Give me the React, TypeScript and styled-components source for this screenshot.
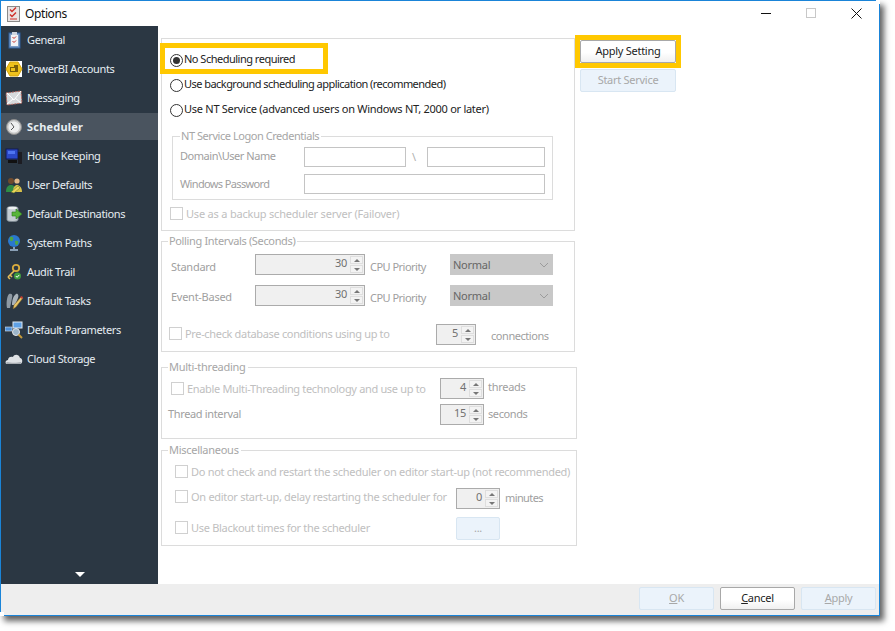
import React from "react";
import styled, { createGlobalStyle } from "styled-components";

const Global = createGlobalStyle`
  html, body { margin: 0; padding: 0; background: #fff; }
  body { font-family: "Noto Sans", "Liberation Sans", sans-serif; font-size: 11px; line-height: 14px; letter-spacing: -0.27px; }
  * { box-sizing: border-box; }
`;

const Page = styled.div`width: 895px; height: 631px; overflow: hidden; background: #fff;`;
const Win = styled.div`
  width: 880px; height: 616px; display: flex; flex-direction: column; background: #fff;
  border: 1px solid #1a84d8; box-shadow: 4px 5px 6px rgba(0,0,0,.62);
`;
const TitleBar = styled.div`height: 25px; display: flex; align-items: center; padding-left: 5px; flex: none;`;
const TitleText = styled.span`font-size: 12px; color: #111; margin-left: 4px; flex: 1; letter-spacing: -0.4px;`;
const WinBtn = styled.div`width: 45px; height: 25px; display: flex; align-items: center; justify-content: center;`;
const Body = styled.div`flex: 1; display: flex; min-height: 0;`;
const Sidebar = styled.nav`width: 157px; background: #2b3743; display: flex; flex-direction: column; flex: none;`;
const NavRow = styled.div<{ $active?: boolean }>`
  height: 27px; margin-bottom: 2px; display: flex; align-items: center; padding-left: 4px; gap: 4px;
  color: #e6edf2; background: ${p => (p.$active ? "#4a545f" : "transparent")};
  font-weight: ${p => (p.$active ? 700 : 400)};
  letter-spacing: ${p => (p.$active ? "0.2px" : "-0.37px")};
`;
const NavIcon = styled.svg`width: 18px; height: 18px; flex: none;`;
const NavArrow = styled.div`
  margin: auto auto 7px; width: 0; height: 0;
  border-left: 5px solid transparent; border-right: 5px solid transparent; border-top: 5px solid #fff;
`;
const Content = styled.main`flex: 1; display: flex; padding: 12px 0 0 3px; align-items: flex-start;`;
const FormCol = styled.div`width: 416px; flex: none; display: flex; flex-direction: column; align-items: flex-start;`;
const SideCol = styled.div`display: flex; flex-direction: column; gap: 6px; padding: 2px 0 0 3px;`;

const Group = styled.section<{ $w: number; $h: number; $mt?: number; $ml?: number; $pl?: number }>`
  width: ${p => p.$w}px; height: ${p => p.$h}px; flex: none;
  margin-top: ${p => p.$mt ?? 0}px; margin-left: ${p => p.$ml ?? 0}px; padding-left: ${p => p.$pl ?? 0}px;
  border: 1px solid #dcdcdc;
`;
const Legend = styled.div<{ $ml?: number; $ls?: number }>`
  display: table; margin: -8px 0 0 ${p => p.$ml ?? 6}px; padding: 0 2px 0 1px; background: #fff; color: #a6a6a6; height: 14px;
  letter-spacing: ${p => p.$ls ?? -0.27}px;
`;
const Row = styled.div<{ $h: number; $mt: number; $pl?: number }>`
  display: flex; align-items: flex-start; height: ${p => p.$h}px; margin-top: ${p => p.$mt}px; padding-left: ${p => p.$pl ?? 0}px;
`;
const RadioList = styled.div`padding-top: 8px;`;
const RadioRow = styled.label<{ $ls?: number }>`
  display: flex; align-items: center; height: 25px; color: #222; gap: 1px; padding-bottom: 1px;
  letter-spacing: ${p => p.$ls ?? -0.27}px;
`;
const Radio = styled.span<{ $on?: boolean }>`
  width: 13px; height: 13px; border-radius: 50%; border: 1px solid #333; background: #fff; flex: none;
  display: flex; align-items: center; justify-content: center; position: relative; top: 1px;
  &::after { content: ""; width: 7px; height: 7px; border-radius: 50%; background: ${p => (p.$on ? "#333" : "transparent")}; }
`;
const Label = styled.span<{ $w?: number; $t?: number; $l?: number; $strong?: boolean; $ls?: number }>`
  display: block; flex: none; width: ${p => (p.$w ? `${p.$w}px` : "auto")}; margin-top: ${p => p.$t ?? 0}px;
  margin-left: ${p => p.$l ?? 0}px; letter-spacing: ${p => p.$ls ?? -0.27}px;
  color: ${p => (p.$strong ? "#a0a0a0" : "#c0c0c0")}; white-space: nowrap;
`;
const Box = styled.span<{ $t?: number }>`
  width: 13px; height: 13px; border: 1px solid #d0d0d0; background: #fff; flex: none; margin-top: ${p => p.$t ?? 0}px;
  margin-right: 3px;
`;
const TextField = styled.div<{ $w: number; $h?: number }>`
  width: ${p => p.$w}px; height: ${p => p.$h ?? 20}px; border: 1px solid #c4c4c4; background: #fff; flex: none;
`;
const Spin = styled.div<{ $w: number }>`
  width: ${p => p.$w}px; height: 21px; flex: none; display: flex; border: 1px solid #ababab; background: #f0f0f0;
`;
const SpinValue = styled.span`flex: 1; text-align: right; color: #707070; padding-right: 3px; line-height: 16px;`;
const SpinBtns = styled.div`width: 14px; display: flex; flex-direction: column; gap: 1px; padding: 1px 1px 1px 0;`;
const SpinBtn = styled.div<{ $down?: boolean }>`
  flex: 1; background: #f3f3f3; border: 1px solid #dedede; display: flex; align-items: center; justify-content: center;
  &::after {
    content: ""; width: 0; height: 0; border-left: 3px solid transparent; border-right: 3px solid transparent;
    ${p => (p.$down ? "border-top: 3px solid #777;" : "border-bottom: 3px solid #777;")}
  }
`;
const Select = styled.div`
  width: 103px; height: 21px; flex: none; background: #c8c8c8; color: #666; display: flex; align-items: center;
  justify-content: space-between; padding: 0 4px 0 3px;
`;
const Btn = styled.div<{ $w: number; $h: number; $active?: boolean }>`
  width: ${p => p.$w}px; height: ${p => p.$h}px; flex: none; display: flex; align-items: center; justify-content: center;
  border-radius: 2px; padding-bottom: 1px;
  ${p => p.$active
    ? "border: 1px solid #a8a8a8; background: linear-gradient(#fff 55%, #f0f0f0); color: #222;"
    : "border: 1px solid #d8e6f2; background: #ebf3fb; color: #a8a8a8;"}
  u { text-underline-offset: 1px; }
`;
const Footer = styled.footer`
  height: 31px; flex: none; background: #eee; display: flex; justify-content: flex-end; gap: 6px; padding: 3px 3px 0 0;
`;
const Highlight = styled.div<{ $x: number; $y: number; $w: number; $h: number }>`
  position: absolute; left: ${p => p.$x}px; top: ${p => p.$y}px; width: ${p => p.$w}px; height: ${p => p.$h}px;
  border: 5px solid #ffc800; pointer-events: none;
`;
const CornerCut = styled.div<{ $x: number; $y: number }>`
  position: absolute; left: ${p => p.$x}px; top: ${p => p.$y}px; width: 4px; height: 4px; background: #fff;
`;
const Stage = styled.div`position: relative;`;
const Backslash = styled.span`width: 21px; flex: none; color: #b0b0b0; text-align: center; padding: 3px 5px 0 0;`;

const Spinner = ({ w, v }: { w: number; v: string }) => (
  <Spin $w={w}><SpinValue>{v}</SpinValue><SpinBtns><SpinBtn /><SpinBtn $down /></SpinBtns></Spin>
);
const Chevron = () => (
  <svg width="10" height="6" viewBox="0 0 10 6"><path d="M1 1l4 4 4-4" fill="none" stroke="#9b9b9b" /></svg>
);

const icons: Record<string, React.ReactNode> = {
  General: <>
    <rect x="4" y="2" width="11" height="15" fill="#7c9cc4" stroke="#2e5f9b" />
    <rect x="6" y="4" width="7" height="11" fill="#f1f3f6" />
    <rect x="7" y="1" width="5" height="3" fill="#cfd6df" />
    <path d="M7.500 6l1.500 1.500 2-2M7.500 10l1.500 1.500 2-2" stroke="#c8322c" fill="none" />
  </>,
  Power: <>
    <rect x="1" y="1" width="16" height="16" fill="#fff" />
    <path d="M5 2h8l4 7-4 7H5L1 9z" fill="#efc21c" stroke="#d4a30c" />
    <path d="M5 7h4v5H5zM9 5h4v7H9z" fill="#7a5f08" />
    <rect x="6" y="8" width="4" height="3" fill="#efc21c" />
  </>,
  Mail: <>
    <path d="M1 4l15-2 1 12-15 2z" fill="#d7dadd" stroke="#b5675f" strokeDasharray="2 1" />
    <path d="M2 4l7 7 7-9M2 15l6-5M10 9l6 5" stroke="#fff" fill="none" />
  </>,
  Clock: <>
    <circle cx="9" cy="9" r="7.500" fill="#c9c9c9" stroke="#8d8d8d" />
    <circle cx="9" cy="9" r="5.500" fill="#efefef" />
    <path d="M9 9L6 5M9 9l-3 3" stroke="#555" fill="none" />
  </>,
  House: <>
    <rect x="1" y="2" width="12" height="10" fill="#2b49c8" stroke="#101a55" />
    <rect x="3" y="13" width="9" height="3" fill="#111" />
    <rect x="13" y="5" width="4" height="12" fill="#1c1c22" />
    <path d="M3 4h7v3H3z" fill="#4f75f0" />
  </>,
  Users: <>
    <circle cx="6" cy="5" r="3" fill="#6f4a2c" />
    <path d="M1 16c0-5 2-7 5-7s5 2 5 7z" fill="#2f8b45" />
    <circle cx="12" cy="5" r="2.600" fill="#e2b98a" />
    <path d="M8 16c0-5 2-7 4-7s5 2 5 7z" fill="#d9c14a" />
    <path d="M6 16l7-6 2 2-6 5z" fill="#efd65a" stroke="#587c2e" strokeWidth=".5" />
  </>,
  Dest: <>
    <path d="M2 3c0-2 11-2 11 0v12c0 2-11 2-11 0z" fill="#c4ccd2" stroke="#7b8791" />
    <ellipse cx="7.500" cy="3" rx="4.500" ry="1.300" fill="#eef1f3" />
    <path d="M7 7h4V4l6 5-6 5v-3H7z" fill="#58b53a" stroke="#2c7a1d" strokeWidth=".6" />
  </>,
  Globe: <>
    <circle cx="9" cy="7" r="6" fill="#2a78cf" />
    <path d="M5 3c3-1 4 1 3 3S4 8 5 3zM10 7c3-1 4 0 3 3-2 2-3 1-3-3z" fill="#4da644" />
    <path d="M9 13v2M5 16h8" stroke="#a9c2dd" strokeWidth="1.500" />
  </>,
  Key: <>
    <circle cx="11" cy="5" r="3.200" fill="none" stroke="#d9ab3d" strokeWidth="1.800" />
    <path d="M9 8l-6 6M3 14l2 2M5 12l2 2" stroke="#e6bd58" strokeWidth="1.600" fill="none" />
    <circle cx="12.500" cy="13" r="3.500" fill="#3f9c3f" />
    <path d="M10.800 13l1.300 1.300 2.200-2.400" stroke="#fff" fill="none" />
  </>,
  Tasks: <>
    <path d="M4 2c3-1 4 1 3 4L5 16H2C1 11 2 4 4 2z" fill="#8e99a3" />
    <path d="M11 2c2-1 3 2 2 4l-3 7H7c0-4 1-9 4-11z" fill="#aab3ba" />
    <path d="M8 17l1-4 7-8 2 1-7 9z" fill="#e9c668" stroke="#7b5a20" strokeWidth=".5" />
    <path d="M15 5l2-1 1 2-1 1z" fill="#c53b33" />
  </>,
  Params: <>
    <rect x="8" y="1" width="9" height="6" fill="#5fa1e5" stroke="#dfe9f2" />
    <rect x="0" y="6" width="7" height="4" fill="#4d8fd8" stroke="#dfe9f2" strokeWidth=".6" />
    <circle cx="11" cy="11" r="3.500" fill="#9db6cb" stroke="#e6e6e6" />
    <path d="M13.500 13.500L17 17" stroke="#c69a3a" strokeWidth="2" />
  </>,
  Cloud: <>
    <path d="M2 14c-2 0-2-4 1-4 0-3 3-4 5-3 1-3 6-3 7 1 3 0 3 6 0 6z" fill="#dfe2e6" />
    <path d="M2 14c-1 0-1-2 0-2 4 1 10 1 14 0 0 1 0 2-1 2z" fill="#a8adb3" />
  </>,
};

const nav: [string, string][] = [
  ["General", "General"], ["PowerBI Accounts", "Power"], ["Messaging", "Mail"], ["Scheduler", "Clock"],
  ["House Keeping", "House"], ["User Defaults", "Users"], ["Default Destinations", "Dest"], ["System Paths", "Globe"],
  ["Audit Trail", "Key"], ["Default Tasks", "Tasks"], ["Default Parameters", "Params"], ["Cloud Storage", "Cloud"],
];

export default function App() {
  return (
    <Page>
      <Global />
      <Stage>
        <Win>
          <TitleBar>
            <svg width="15" height="17" viewBox="0 0 15 17">
              <rect x="1.500" y="1.500" width="12" height="15" fill="#e9e4e4" stroke="#8a8a8a" />
              <path d="M4 4.500l2 2 4-4M4 9.500l2 2 4-4" stroke="#cf2f2a" strokeWidth="1.400" fill="none" />
              <path d="M4 14h7" stroke="#cf2f2a" />
            </svg>
            <TitleText>Options</TitleText>
            <WinBtn><svg width="11" height="11"><path d="M0 5.500h10" stroke="#111" /></svg></WinBtn>
            <WinBtn><svg width="11" height="11"><rect x=".5" y=".5" width="9" height="9" fill="none" stroke="#c8c8c8" /></svg></WinBtn>
            <WinBtn><svg width="11" height="11"><path d="M.5.500l10 10M10.500.500l-10 10" stroke="#111" /></svg></WinBtn>
          </TitleBar>
          <Body>
            <Sidebar>
              {nav.map(([t, k]) => (
                <NavRow key={t} $active={t === "Scheduler"}>
                  <NavIcon viewBox="0 0 18 18">{icons[k]}</NavIcon>
                  <span>{t}</span>
                </NavRow>
              ))}
              <NavArrow />
            </Sidebar>
            <Content>
              <FormCol>
                <Group $w={414} $h={193} $pl={8}>
                  <RadioList>
                    <RadioRow $ls={-0.5}><Radio $on /> No Scheduling required</RadioRow>
                    <RadioRow $ls={-0.54}><Radio /> Use background scheduling application (recommended)</RadioRow>
                    <RadioRow><Radio /> Use NT Service (advanced users on Windows NT, 2000 or later)</RadioRow>
                  </RadioList>
                  <Group $w={381} $h={64} $mt={14} $ml={2} $pl={7}>
                    <Legend $ml={0} $ls={-0.45}>NT Service Logon Credentials</Legend>
                    <Row $h={20} $mt={4}>
                      <Label $w={124} $t={2} $strong $ls={-0.46}>Domain\User Name</Label>
                      <TextField $w={102} />
                      <Backslash>\</Backslash>
                      <TextField $w={118} />
                    </Row>
                    <Row $h={20} $mt={7}>
                      <Label $w={124} $t={3} $strong $ls={-0.64}>Windows Password</Label>
                      <TextField $w={241} />
                    </Row>
                  </Group>
                  <Row $h={14} $mt={7}>
                    <Box /><Label $ls={-0.2}>Use as a backup scheduler server (Failover)</Label>
                  </Row>
                </Group>
                <Group $w={414} $h={111} $mt={10}>
                  <Legend $ls={-0.35}>Polling Intervals (Seconds)</Legend>
                  <Row $h={21} $mt={6} $pl={9}>
                    <Label $w={84} $t={6} $strong>Standard</Label>
                    <Spinner w={110} v="30" />
                    <Label $w={80} $t={6} $l={5} $strong $ls={-0.52}>CPU Priority</Label>
                    <Select>Normal<Chevron /></Select>
                  </Row>
                  <Row $h={21} $mt={10} $pl={9}>
                    <Label $w={84} $t={5} $strong>Event-Based</Label>
                    <Spinner w={110} v="30" />
                    <Label $w={80} $t={6} $l={5} $strong $ls={-0.52}>CPU Priority</Label>
                    <Select>Normal<Chevron /></Select>
                  </Row>
                  <Row $h={21} $mt={18} $pl={7}>
                    <Box $t={3} /><Label $w={251} $t={3} $ls={-0.34}>Pre-check database conditions using up to</Label>
                    <Spinner w={40} v="5" />
                    <Label $t={5} $l={15} $strong $ls={-0.45}>connections</Label>
                  </Row>
                </Group>
                <Group $w={416} $h={72} $mt={15}>
                  <Legend>Multi-threading</Legend>
                  <Row $h={21} $mt={4} $pl={9}>
                    <Box $t={4} /><Label $w={253} $t={4} $ls={-0.33}>Enable Multi-Threading technology and use up to</Label>
                    <Spinner w={44} v="4" />
                    <Label $t={2} $l={4} $strong>threads</Label>
                  </Row>
                  <Row $h={21} $mt={5} $pl={6}>
                    <Label $w={272} $t={3} $strong $ls={-0.35}>Thread interval</Label>
                    <Spinner w={44} v="15" />
                    <Label $t={3} $l={4} $strong $ls={-0.4}>seconds</Label>
                  </Row>
                </Group>
                <Group $w={416} $h={96} $mt={11} $pl={13}>
                  <Legend $ml={-7}>Miscellaneous</Legend>
                  <Row $h={14} $mt={8}>
                    <Box /><Label $ls={-0.28}>Do not check and restart the scheduler on editor start-up (not recommended)</Label>
                  </Row>
                  <Row $h={21} $mt={9}>
                    <Box $t={2} /><Label $w={265} $t={2} $ls={-0.29}>On editor start-up, delay restarting the scheduler for</Label>
                    <Spinner w={44} v="0" />
                    <Label $t={3} $l={5} $strong $ls={-0.6}>minutes</Label>
                  </Row>
                  <Row $h={23} $mt={8}>
                    <Box $t={4} /><Label $w={265} $t={4} $ls={-0.3}>Use Blackout times for the scheduler</Label>
                    <Btn $w={44} $h={23}>...</Btn>
                  </Row>
                </Group>
              </FormCol>
              <SideCol>
                <Btn $w={96} $h={23} $active>Apply Setting</Btn>
                <Btn $w={96} $h={23}>Start Service</Btn>
              </SideCol>
            </Content>
          </Body>
          <Footer>
            <Btn $w={75} $h={23}><span><u>O</u>K</span></Btn>
            <Btn $w={75} $h={23} $active><span><u>C</u>ancel</span></Btn>
            <Btn $w={75} $h={23}><span><u>A</u>pply</span></Btn>
          </Footer>
        </Win>
        <Highlight $x={160} $y={43} $w={168} $h={31} />
        <Highlight $x={575} $y={35} $w={106} $h={33} />
        <CornerCut $x={876} $y={0} />
        <CornerCut $x={0} $y={612} />
      </Stage>
    </Page>
  );
}
